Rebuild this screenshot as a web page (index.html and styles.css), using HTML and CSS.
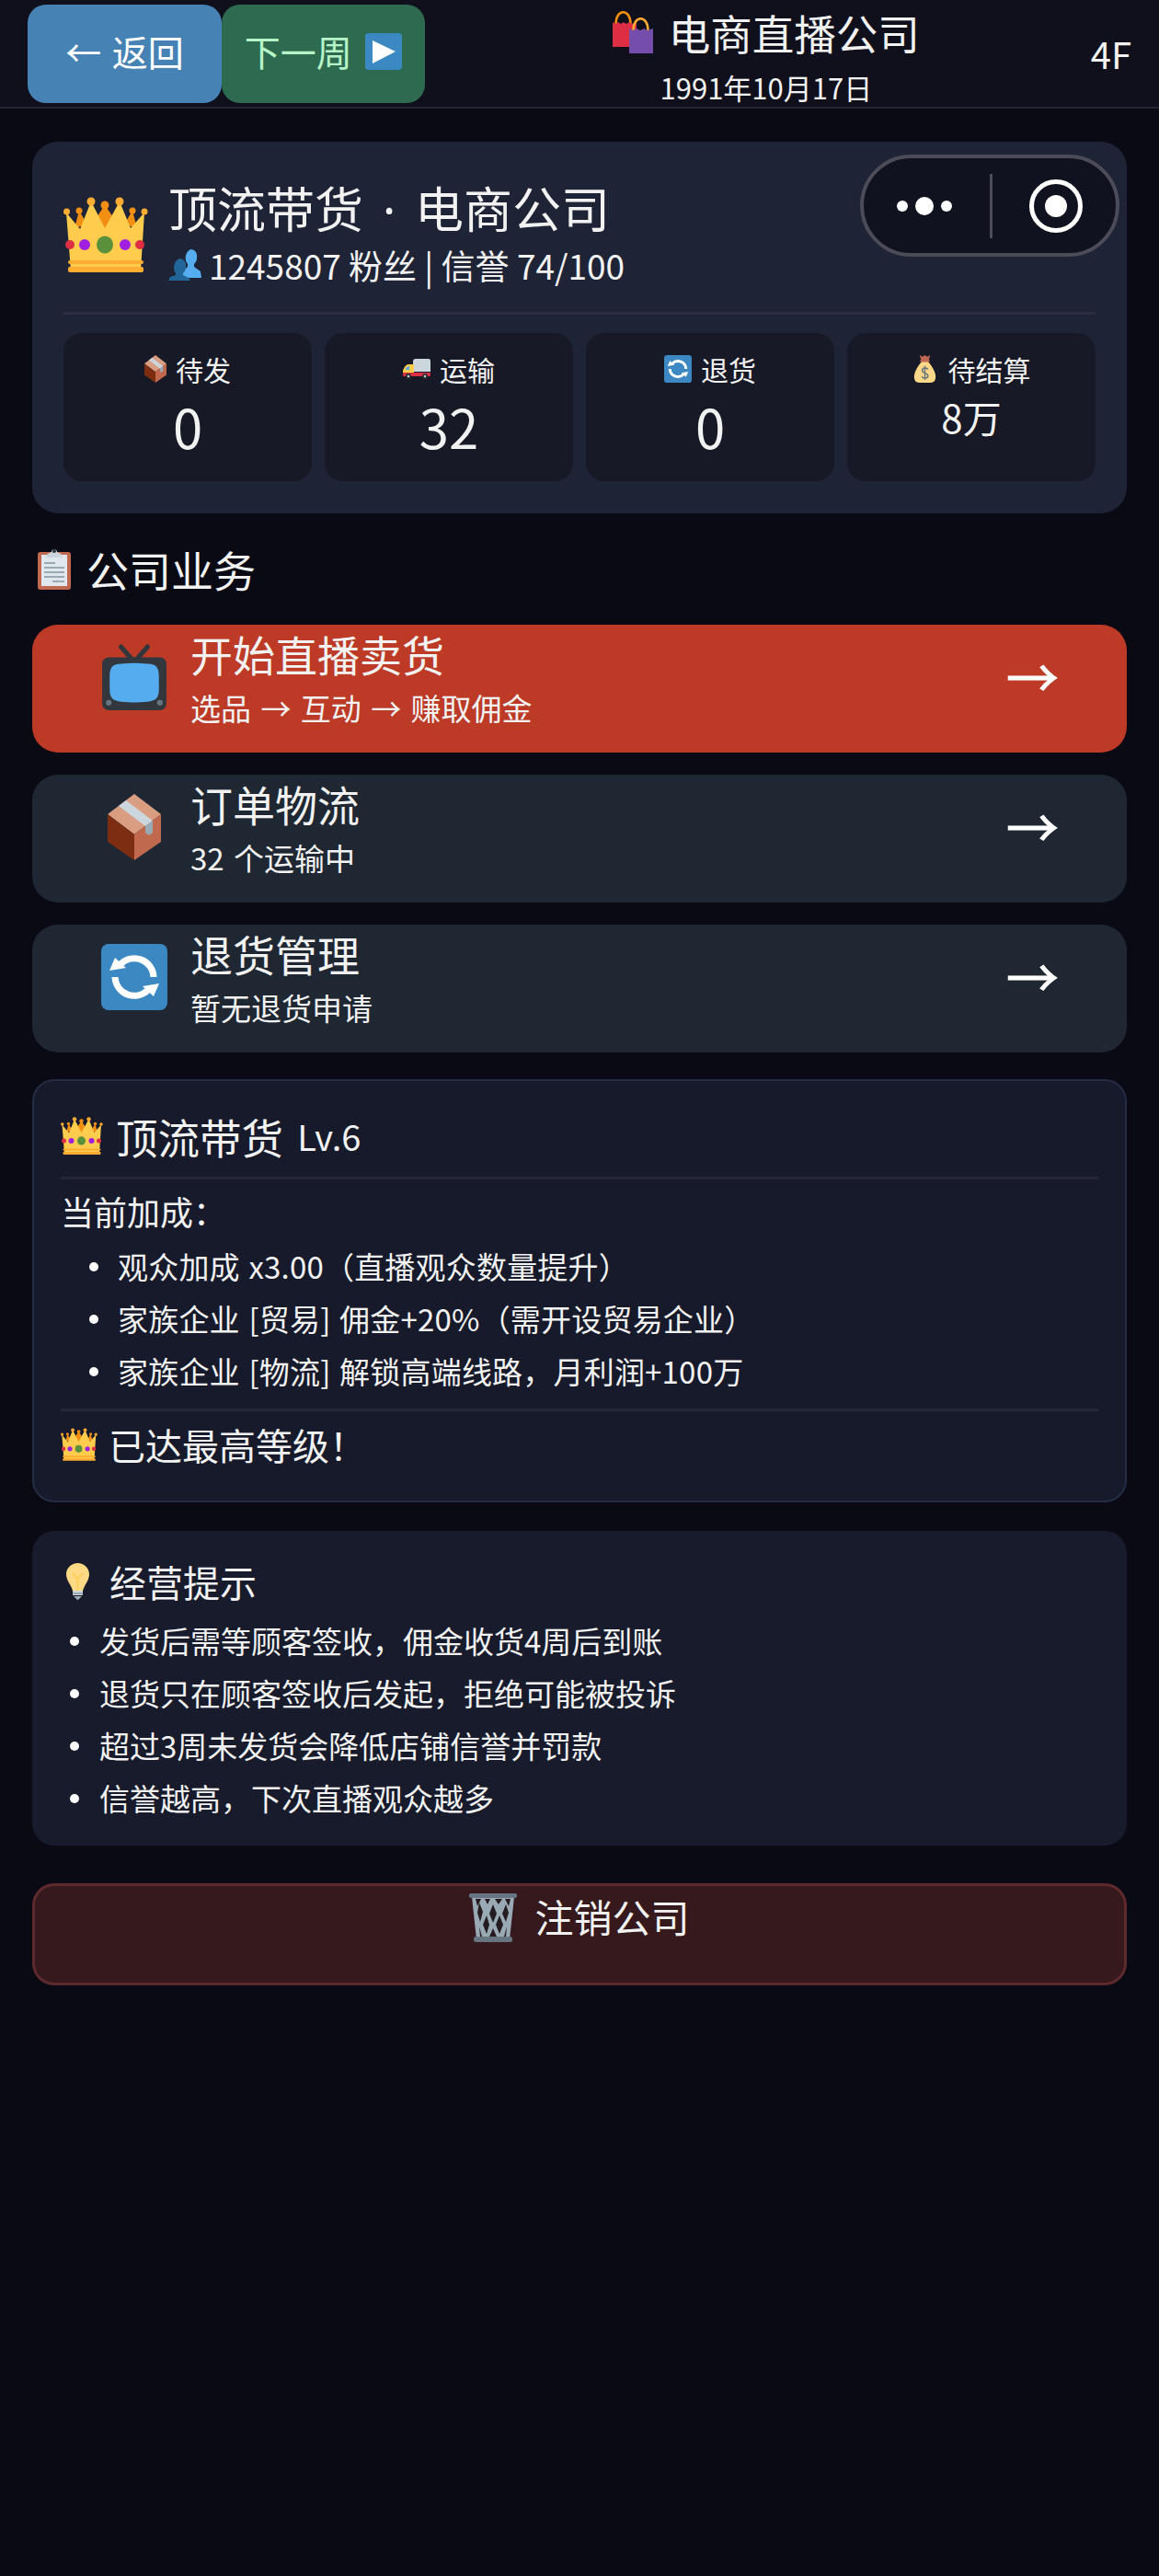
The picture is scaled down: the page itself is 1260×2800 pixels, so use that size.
FILE: index.html
```html
<!DOCTYPE html>
<html lang="zh-CN">

<head>
	<meta charset="UTF-8">
	<meta name="viewport" content="width=device-width, initial-scale=1.0">
	<title>电商直播公司</title>
	<link rel="stylesheet" href="styles.css">
</head>

<body>
	<!-- shared emoji drawings -->
	<svg class="defs" width="0" height="0">
		<symbol id="i-crown" viewBox="0 0 92 82">
			<path fill="#f18f13" d="M12 34 17 15 26 30ZM36 22 45 9 54 22 45 38ZM66 30 75 15 80 34Z"/>
			<circle cx="17" cy="15" r="3.5" fill="#f18f13"/><circle cx="45" cy="9" r="4.5" fill="#f18f13"/><circle cx="75" cy="15" r="3.5" fill="#f18f13"/>
			<path fill="#ffcc4d" d="M3 17 18 35 30 5 45 34 61 5 73 34 88 17 84 80H8Z"/>
			<circle cx="3.500" cy="16" r="3.500" fill="#ffac33"/><circle cx="30" cy="5" r="4.500" fill="#ffac33"/><circle cx="61" cy="5" r="4.500" fill="#ffac33"/><circle cx="88" cy="16" r="3.500" fill="#ffac33"/>
			<circle cx="7" cy="52" r="5" fill="#dd2e44"/><circle cx="23" cy="52" r="6" fill="#a01fe0"/><ellipse cx="45" cy="52" rx="9" ry="9.500" fill="#5c913b"/><circle cx="67" cy="52" r="6" fill="#a01fe0"/><circle cx="83" cy="52" r="5" fill="#dd2e44"/>
			<rect x="5" y="69" width="82" height="4" rx="2" fill="#ffac33"/><rect x="5" y="76" width="82" height="6" rx="2" fill="#ffac33"/>
		</symbol>
		<symbol id="i-bags" viewBox="0 0 44 46">
			<path fill="none" stroke="#f4900c" stroke-width="2.500" d="M3.500 14C3.500 -3 19.500 -3 19.500 14"/>
			<path fill="#dd2e44" d="M0 12 3 14 6 12 9 14 12 12 15 14 18 12 21 14 26 12V39H0Z"/>
			<path fill="none" stroke="#ffac33" stroke-width="2.500" d="M22.500 21C22.500 4 38.500 4 38.500 21"/>
			<path fill="#744eaa" d="M18 19 22 21 26 19 30 21 34 19 38 21 44 19V46H18Z"/>
		</symbol>
		<symbol id="i-busts" viewBox="0 0 36 34">
			<path fill="#55acee" d="M24 0C29 0 32 4 31 10 31 13 29 15 28 16V19L35 24 36 31H16V23L21 19V16C18 13 17 4 24 0Z"/>
			<path fill="#269" d="M12 10C17 10 20 14 19 20 19 23 17 25 16 26V28L22 31 24 34H0L2 30 8 28V26C5 23 5 13 12 10Z"/>
		</symbol>
		<symbol id="i-box" viewBox="0 0 58 72">
			<path fill="#d99e82" d="M29 0 58 22 29 44 0 22Z"/>
			<path fill="#7c2d12" d="M0 22 29 44V72L0 52Z"/>
			<path fill="#c1694f" d="M58 22 29 44V72L58 52Z"/>
			<path fill="#ccd6dd" d="M12 13 20 7 49 29 41 35Z"/>
			<path fill="#99aab5" d="M41 35 49 29V42L45 45 41 42Z"/>
		</symbol>
		<symbol id="i-truck" viewBox="0 0 30 22">
			<path fill="#ccd6dd" d="M11 3C11 1 12 0 14 0H28C29 0 30 1 30 2V14H11Z"/>
			<path fill="#ffcc4d" d="M12 6H6C3 6 1 10 0 13V16H12Z"/>
			<path fill="#55acee" d="M3 11C4 9 5 8 7 8V12H3Z"/>
			<path fill="#dd2e44" d="M0 15H30V18C30 19 29 19 28 19H0Z"/>
			<circle cx="6" cy="19" r="3" fill="#292f33"/><circle cx="24" cy="19" r="3" fill="#292f33"/>
			<circle cx="6" cy="19" r="1.200" fill="#ccd6dd"/><circle cx="24" cy="19" r="1.200" fill="#ccd6dd"/>
		</symbol>
		<symbol id="i-refresh" viewBox="0 0 36 36">
			<rect width="36" height="36" rx="4" fill="#3b88c3"/>
			<path fill="none" stroke="#fff" stroke-width="3.500" d="M10.500 11A10.500 10.500 0 0 1 28.500 18M25.500 25A10.500 10.500 0 0 1 7.500 18"/>
			<path fill="#fff" d="M4.500 14.500 7.500 7.500 13.500 13ZM31.500 21.500 28.500 28.500 22.500 23Z"/>
		</symbol>
		<symbol id="i-money" viewBox="0 0 28 36">
			<path fill="#fdd888" d="M10 8C6 13 0 21 0 28 0 33 2 36 7 36H21C26 36 28 33 28 28 28 21 22 13 18 8Z"/>
			<path fill="#bf6952" d="M7 0 11 2 14 0 17 2 21 0 19 6H9Z"/><rect x="8" y="6" width="12" height="3" rx="1" fill="#bf6952"/>
			<path fill="none" stroke="#67757f" stroke-width="1.800" d="M18 19C17 16 10.500 16 10.500 20 10.500 24 18 23 18 27 18 31 11 31 10 28M14 14V32"/>
		</symbol>
		<symbol id="i-clip" viewBox="0 0 36 46">
			<rect y="5" width="36" height="41" rx="3" fill="#c1694f"/>
			<rect x="4" y="8" width="28" height="34" fill="#e1e8ed"/>
			<path fill="#99aab5" d="M7 16H19V18H7ZM7 21H29V23H7ZM7 26H29V28H7ZM7 31H29V33H7ZM16 36H29V38H16Z"/>
			<path fill="#ccd6dd" d="M9 11C9 7 13 6 15 5 15 1 21 1 21 5 23 6 27 7 27 11Z"/>
			<circle cx="18" cy="4" r="2" fill="#292f33"/>
		</symbol>
		<symbol id="i-tv" viewBox="0 0 68 70">
			<path fill="none" stroke="#31373d" stroke-width="5" stroke-linecap="round" d="M20 3 34 19 48 3"/>
			<rect y="14" width="68" height="56" rx="7" fill="#31373d"/>
			<path fill="#55acee" d="M8 34C8 24 12 21 20 21 30 20 38 20 48 21 56 21 60 24 60 34V48C60 58 56 60 48 61 38 62 30 62 20 61 12 60 8 58 8 48Z"/>
			<circle cx="7" cy="62" r="3" fill="#66757f"/><circle cx="61" cy="62" r="3" fill="#66757f"/>
		</symbol>
		<symbol id="i-bulb" viewBox="0 0 25 40">
			<path fill="#ffd983" d="M12.500 0C19 0 25 5 25 12 25 19 20 23 18 30H7C5 23 0 19 0 12 0 5 6 0 12.500 0Z"/>
			<path fill="none" stroke="#ffcc4d" stroke-width="1.500" d="M7 11 12.500 17 18 11M12.500 17V30"/>
			<path fill="#ccd6dd" d="M7 30H18V35H7Z"/><path fill="#99aab5" d="M7 32H18V34H7ZM8 36H17L13 40H12Z"/>
		</symbol>
		<symbol id="i-trash" viewBox="0 0 52 53">
			<path fill="#99aab5" d="M3 4H49L44 50H8Z"/>
			<path fill="#241c20" d="M7 6H13L9 14ZM17 6H23L20 12ZM28 6H36L32 12ZM39 6H45L43 14ZM11 10 15 20 12 31 9 21ZM26 12 30 22 26 32 22 22ZM40 12 43 21 40 31 36 22ZM19 24 22 34 19 44 15 34ZM33 24 37 34 33 44 29 34ZM11 36 14 47H12ZM41 36 38 47H40ZM26 38 30 47H22Z"/>
			<rect width="52" height="5" rx="2" fill="#66757f"/>
			<rect x="5" y="47" width="42" height="6" rx="2.500" fill="#66757f"/>
		</symbol>
		<symbol id="i-play" viewBox="0 0 40 40">
			<rect width="40" height="40" rx="4" fill="#3b88c3"/>
			<path fill="#fff" d="M8 8 33 20 8 33Z"/>
		</symbol>
	</svg>

	<div class="header">
		<div class="btn back">← 返回</div>
		<div class="btn next">下一周 <svg class="play"><use href="#i-play"/></svg></div>
		<div class="title-box">
			<div class="page-title"><svg class="bags"><use href="#i-bags"/></svg>电商直播公司</div>
			<div class="page-date">1991年10月17日</div>
		</div>
		<div class="floor">4F</div>
	</div>

	<!-- wechat capsule lies over the card -->
	<div class="capsule">
		<div class="dots"><span></span><span class="big"></span><span></span></div>
		<div class="capsule-line"></div>
		<div class="target"><span></span></div>
	</div>

	<div class="content">
		<div class="company-card">
			<div class="company-top">
				<svg class="crown-big"><use href="#i-crown"/></svg>
				<div>
					<div class="company-name">顶流带货 <span class="name-dot">·</span> 电商公司</div>
					<div class="company-meta"><svg class="busts"><use href="#i-busts"/></svg>1245807 粉丝 | 信誉 74/100</div>
				</div>
			</div>
			<div class="stats">
				<div class="stat">
					<div class="stat-label"><svg class="box-sm"><use href="#i-box"/></svg>待发</div>
					<div class="stat-value">0</div>
				</div>
				<div class="stat">
					<div class="stat-label"><svg class="truck"><use href="#i-truck"/></svg>运输</div>
					<div class="stat-value">32</div>
				</div>
				<div class="stat">
					<div class="stat-label"><svg class="refresh-sm"><use href="#i-refresh"/></svg>退货</div>
					<div class="stat-value">0</div>
				</div>
				<div class="stat">
					<div class="stat-label"><svg class="money"><use href="#i-money"/></svg>待结算</div>
					<div class="stat-value small">8万</div>
				</div>
			</div>
		</div>

		<div class="section-title"><svg class="clip"><use href="#i-clip"/></svg>公司业务</div>

		<div class="action live">
			<svg class="action-icon"><use href="#i-tv"/></svg>
			<div class="action-text">
				<div class="action-name">开始直播卖货</div>
				<div class="action-sub">选品 → 互动 → 赚取佣金</div>
			</div>
			<div class="action-arrow">→</div>
		</div>
		<div class="action">
			<svg class="action-icon"><use href="#i-box"/></svg>
			<div class="action-text">
				<div class="action-name">订单物流</div>
				<div class="action-sub">32 个运输中</div>
			</div>
			<div class="action-arrow">→</div>
		</div>
		<div class="action">
			<svg class="action-icon"><use href="#i-refresh"/></svg>
			<div class="action-text">
				<div class="action-name">退货管理</div>
				<div class="action-sub">暂无退货申请</div>
			</div>
			<div class="action-arrow">→</div>
		</div>

		<div class="level-card">
			<div class="level-head"><svg class="crown-mid"><use href="#i-crown"/></svg>顶流带货 <span class="level-num">Lv.6</span></div>
			<div class="level-label">当前加成：</div>
			<ul class="level-list">
				<li>观众加成 x3.00（直播观众数量提升）</li>
				<li>家族企业 [贸易] 佣金+20%（需开设贸易企业）</li>
				<li>家族企业 [物流] 解锁高端线路，月利润+100万</li>
			</ul>
			<div class="level-foot"><svg class="crown-sm"><use href="#i-crown"/></svg>已达最高等级！</div>
		</div>

		<div class="tips-card">
			<div class="tips-head"><svg class="bulb"><use href="#i-bulb"/></svg>经营提示</div>
			<ul class="tips-list">
				<li>发货后需等顾客签收，佣金收货4周后到账</li>
				<li>退货只在顾客签收后发起，拒绝可能被投诉</li>
				<li>超过3周未发货会降低店铺信誉并罚款</li>
				<li>信誉越高，下次直播观众越多</li>
			</ul>
		</div>

		<div class="close-btn"><svg class="trash"><use href="#i-trash"/></svg>注销公司</div>
	</div>
</body>

</html>
```

FILE: styles.css
```css
* {
	box-sizing: border-box;
}

body {
	position: relative;
	margin: 0;
	min-height: 2800px;
	background-color: #0a0a14;
	color: #f2f2f2;
	font-family: "Noto Sans CJK SC", "Noto Sans", sans-serif;
}

.defs {
	position: absolute;
}

.header {
	display: flex;
	align-items: stretch;
	height: 118px;
	padding: 5px 30px 4px;
	background-color: #10101c;
	border-bottom: 2px solid #25253a;
}

.btn {
	display: flex;
	align-items: center;
	justify-content: center;
	padding-bottom: 6px;
	border-radius: 20px;
	font-size: 39px;
	line-height: 1;
	white-space: pre;
}

.back {
	width: 211px;
	background-color: #4682b4;
	color: #fff;
	word-spacing: 3px;
}

.next {
	width: 221px;
	background-color: #2d6a4f;
	color: #b7f5c9;
}

.play {
	width: 40px;
	height: 40px;
	margin-left: 6px;
}

.title-box {
	flex: 1;
	text-align: center;
	padding-left: 18px;
}

.page-title {
	display: flex;
	align-items: center;
	justify-content: center;
	height: 60px;
	font-size: 45.500px;
	line-height: 60px;
}

.bags {
	width: 44px;
	height: 46px;
	margin-right: 17px;
}

.page-date {
	margin-top: 12px;
	font-size: 31px;
	line-height: 36px;
}

.floor {
	align-self: center;
	font-size: 40px;
	margin-top: -2px;
}

.capsule {
	position: absolute;
	top: 168px;
	left: 935px;
	display: flex;
	align-items: center;
	width: 282px;
	height: 111px;
	background-color: #11121f;
	border: 4px solid #4b4c58;
	border-radius: 56px;
}

.dots {
	display: flex;
	align-items: center;
	justify-content: center;
	gap: 8px;
	width: 131px;
	margin-right: 6px;
}

.dots span {
	width: 12px;
	height: 12px;
	background-color: #fff;
	border-radius: 50%;
}

.dots .big {
	width: 20px;
	height: 20px;
}

.capsule-line {
	width: 3px;
	height: 70px;
	background-color: #4b4c58;
}

.target {
	display: flex;
	align-items: center;
	justify-content: center;
	width: 58px;
	height: 58px;
	margin-left: 40px;
	border: 5px solid #fff;
	border-radius: 50%;
}

.target span {
	width: 24px;
	height: 24px;
	background-color: #fff;
	border-radius: 50%;
}

.content {
	padding: 36px 35px 0;
}

.company-card {
	height: 404px;
	padding: 0 34px;
	background-color: #1f2336;
	border-radius: 28px;
}

.company-top {
	display: flex;
	align-items: flex-start;
	height: 188px;
	padding-top: 42px;
	border-bottom: 3px solid #2b2c42;
}

.crown-big {
	flex: none;
	width: 92px;
	height: 82px;
	margin: 18px 22px 0 0;
}

.company-name {
	margin-top: -6px;
	font-size: 53px;
	line-height: 70px;
}

.name-dot {
	margin: 0 9px;
	font-family: "Noto Sans", sans-serif;
}

.company-meta {
	display: flex;
	align-items: center;
	font-size: 37px;
	line-height: 50px;
}

.busts {
	width: 36px;
	height: 34px;
	margin-right: 8px;
}

.stats {
	display: flex;
	gap: 14px;
	margin-top: 20px;
}

.stat {
	flex: 1;
	height: 161px;
	padding-top: 17px;
	background-color: #171926;
	border-radius: 20px;
	text-align: center;
}

.stat-label {
	display: flex;
	align-items: center;
	justify-content: center;
	font-size: 30px;
	line-height: 44px;
}

.box-sm {
	width: 24px;
	height: 30px;
	margin-right: 10px;
}

.truck {
	width: 30px;
	height: 22px;
	margin-right: 10px;
}

.refresh-sm {
	width: 30px;
	height: 30px;
	margin-right: 10px;
}

.money {
	width: 27px;
	height: 30px;
	margin-right: 12px;
}

.stat-value {
	margin-top: 2px;
	font-size: 58px;
	line-height: 76px;
}

.stat-value.small {
	margin-top: 5px;
	font-size: 42px;
	line-height: 50px;
}

.section-title {
	display: flex;
	align-items: center;
	height: 46px;
	margin: 37px 0 38px;
	font-size: 46px;
}

.clip {
	width: 36px;
	height: 46px;
	margin: 0 17px 0 6px;
}

.action {
	display: flex;
	align-items: center;
	height: 139px;
	margin-bottom: 24px;
	padding: 0 74px 25px 75px;
	background-color: #1f2733;
	border-radius: 28px;
}

.action.live {
	background-color: #bc3a26;
}

.action-icon {
	flex: none;
	width: 72px;
	height: 72px;
	margin-right: 25px;
}

.action-text {
	flex: 1;
	margin-bottom: 3px;
}

.action-name {
	font-size: 46px;
	line-height: 60px;
}

.action-sub {
	margin-top: 9px;
	font-size: 33px;
	line-height: 40px;
	word-spacing: 3px;
}

.action-arrow {
	margin-bottom: 7px;
	font-size: 57px;
	line-height: 60px;
	color: #fff;
	-webkit-text-stroke: 1px #fff;
}

.level-card {
	height: 460px;
	margin-top: 29px;
	padding: 35px 29px 0;
	background-color: #171a2b;
	border: 2px solid #252d45;
	border-radius: 24px;
}

.level-head {
	display: flex;
	align-items: center;
	height: 72px;
	padding-bottom: 20px;
	border-bottom: 3px solid #25263a;
	font-size: 45.500px;
	line-height: 48px;
	white-space: pre;
}

.level-num {
	margin-left: 5px;
	font-size: 38px;
}

.crown-mid {
	width: 46px;
	height: 41px;
	margin-right: 14px;
}

.level-label {
	margin-top: 9px;
	font-size: 36px;
	line-height: 50px;
}

.level-list,
.tips-list {
	margin: 0;
	list-style: none;
	font-size: 33px;
}

.level-list {
	padding: 0 0 0 31px;
	margin-top: 7px;
	word-spacing: 2px;
	letter-spacing: .2px;
}

.level-list li,
.tips-list li {
	position: relative;
	height: 57px;
	padding-left: 31px;
	line-height: 57px;
}

.level-list li::before,
.tips-list li::before {
	content: "";
	position: absolute;
	left: 0;
	top: 24px;
	width: 10px;
	height: 10px;
	background-color: #fff;
	border-radius: 50%;
}

.level-foot {
	display: flex;
	align-items: center;
	height: 66px;
	margin-top: 12px;
	padding-top: 9px;
	border-top: 3px solid #25263a;
	font-size: 40px;
}

.crown-sm {
	width: 40px;
	height: 36px;
	margin-right: 12px;
}

.tips-card {
	height: 342px;
	margin-top: 31px;
	padding: 29px 37px 0;
	background-color: #171b2c;
	border-radius: 24px;
}

.tips-head {
	display: flex;
	align-items: center;
	height: 52px;
	font-size: 40px;
}

.bulb {
	width: 25px;
	height: 40px;
	margin-right: 22px;
}

.tips-list {
	padding: 0 0 0 4px;
	margin-top: 10px;
}

.tips-list li {
	padding-left: 32px;
}

.close-btn {
	display: flex;
	justify-content: center;
	align-items: flex-start;
	height: 111px;
	margin-top: 41px;
	padding-top: 8px;
	background-color: #35191d;
	border: 3px solid #5e2a2e;
	border-radius: 24px;
	font-size: 42px;
	line-height: 50px;
}

.trash {
	width: 52px;
	height: 53px;
	margin-right: 19px;
}
```
